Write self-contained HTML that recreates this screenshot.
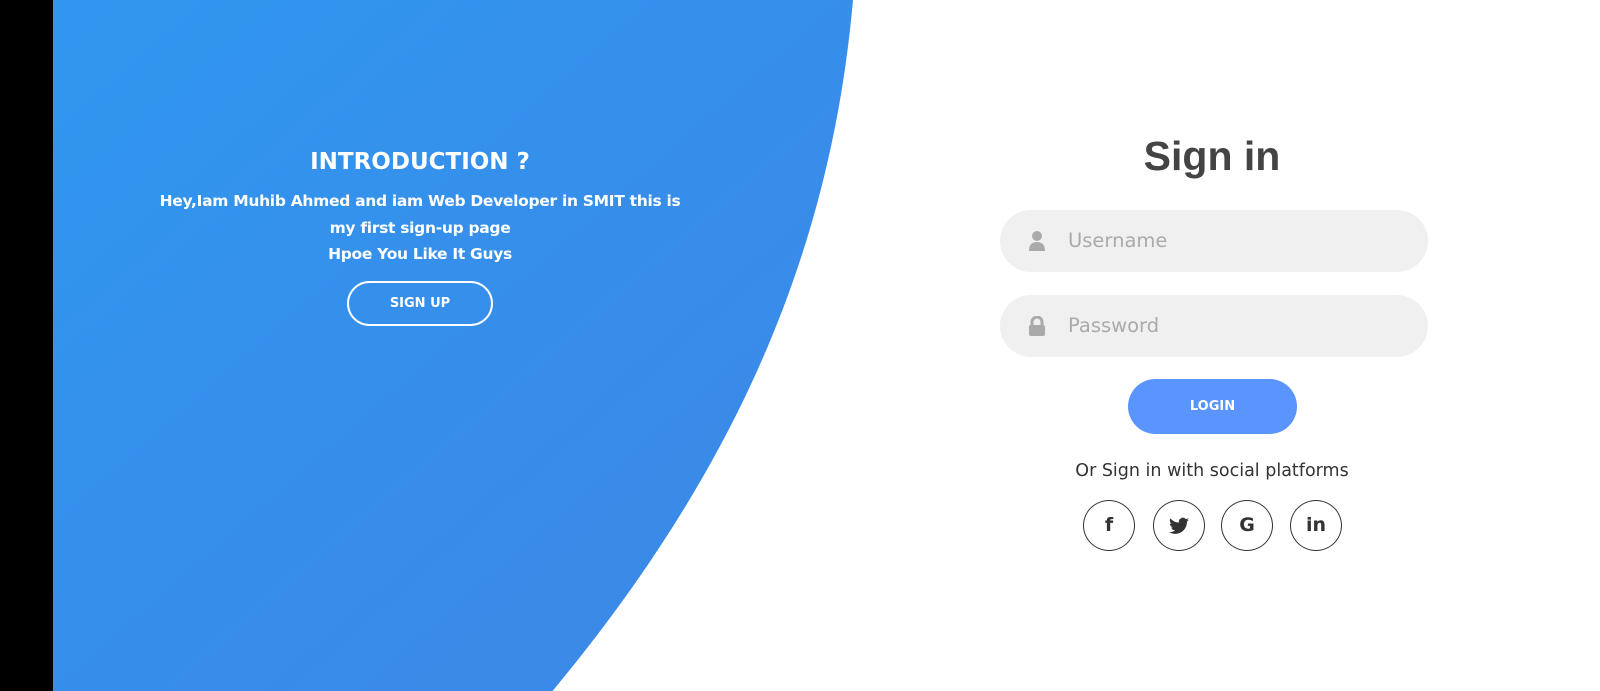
<!DOCTYPE html>
<html><head><meta charset="utf-8"><style>
*{margin:0;padding:0;box-sizing:border-box}
body{width:1600px;height:691px;overflow:hidden;background:#fff;font-family:"DejaVu Sans","Liberation Sans",sans-serif;position:relative}
.black{position:absolute;left:0;top:0;width:53px;height:691px;background:#000}
svg.bg{position:absolute;left:0;top:0}
.intro{position:absolute;left:110px;width:620px;top:149px;text-align:center;color:#fff}
.intro h2{font-size:23px;font-weight:bold;margin-bottom:13px}
.intro p{font-size:15.5px;line-height:26.5px;font-weight:bold;letter-spacing:-0.3px}
.btn1{display:block;margin:13px auto 0;width:146px;height:45px;border:2px solid #fff;border-radius:25px;font-size:13px;font-weight:bold;line-height:41px;color:#fff}
h1{position:absolute;left:1092px;width:240px;top:133px;text-align:center;font-size:41px;color:#444;font-weight:bold;font-family:"Liberation Sans",sans-serif}
.field{position:absolute;left:1000px;width:428px;height:62px;border-radius:31px;background:#f0f0f0;color:#aaa;font-size:19.5px;line-height:62px;padding-left:68px}
.field svg{position:absolute;left:28px;top:21px}
.login{position:absolute;left:1128px;top:379px;width:169px;height:55px;border-radius:28px;background:#5995fd;color:#fff;font-size:13px;font-weight:bold;text-align:center;line-height:55px}
.or{position:absolute;left:1012px;width:400px;top:461px;text-align:center;font-size:17.5px;color:#333}
.soc{position:absolute;top:500px;width:52px;height:51px;border:1px solid #333;border-radius:50%;text-align:center;line-height:49px;font-weight:bold;font-size:19px;color:#333}
</style></head><body>
<svg class="bg" width="1600" height="691"><defs><linearGradient id="g" x1="0" y1="0" x2="1" y2="1"><stop offset="0" stop-color="#2f97ef"/><stop offset="1" stop-color="#3e86e6"/></linearGradient></defs>
<path d="M52,0 L853,0 C830,260 730,480 545,700 L52,700 Z" fill="url(#g)"/></svg>
<div class="black"></div>
<div class="intro"><h2>INTRODUCTION ?</h2><p>Hey,Iam Muhib Ahmed and iam Web Developer in SMIT this is<br>my first sign-up page<br>Hpoe You Like It Guys</p><span class="btn1">SIGN UP</span></div>
<h1>Sign in</h1>
<div class="field" style="top:210px"><svg width="18" height="20" viewBox="0 0 18 20"><circle cx="9" cy="5" r="5" fill="#aaa"/><path d="M1 20 Q1 11 9 11 Q17 11 17 20Z" fill="#aaa"/></svg>Username</div>
<div class="field" style="top:295px"><svg width="18" height="20" viewBox="0 0 18 20"><path d="M4 9 V6 A5 5 0 0 1 14 6 V9" stroke="#aaa" stroke-width="3" fill="none"/><rect x="1" y="9" width="16" height="11" rx="2" fill="#aaa"/></svg>Password</div>
<div class="login">LOGIN</div>
<div class="or">Or Sign in with social platforms</div>
<div class="soc" style="left:1083px">f</div>
<div class="soc" style="left:1153px"><svg width="20" height="18" viewBox="0 0 24 20" style="vertical-align:middle"><path d="M24 2.4c-.9.4-1.8.7-2.8.8 1-.6 1.8-1.6 2.2-2.7-1 .6-2 1-3.1 1.2A4.9 4.9 0 0 0 11.9 6 14 14 0 0 1 1.7.9a4.9 4.9 0 0 0 1.5 6.6c-.8 0-1.6-.2-2.2-.6 0 2.4 1.7 4.4 3.9 4.8-.7.2-1.5.2-2.2.1.6 2 2.4 3.4 4.6 3.4A9.9 9.9 0 0 1 0 17.2 14 14 0 0 0 7.5 19.4c9.1 0 14-7.5 14-14v-.6c1-.7 1.8-1.6 2.5-2.4z" fill="#333"/></svg></div>
<div class="soc" style="left:1221px">G</div>
<div class="soc" style="left:1290px">in</div>
</body></html>
